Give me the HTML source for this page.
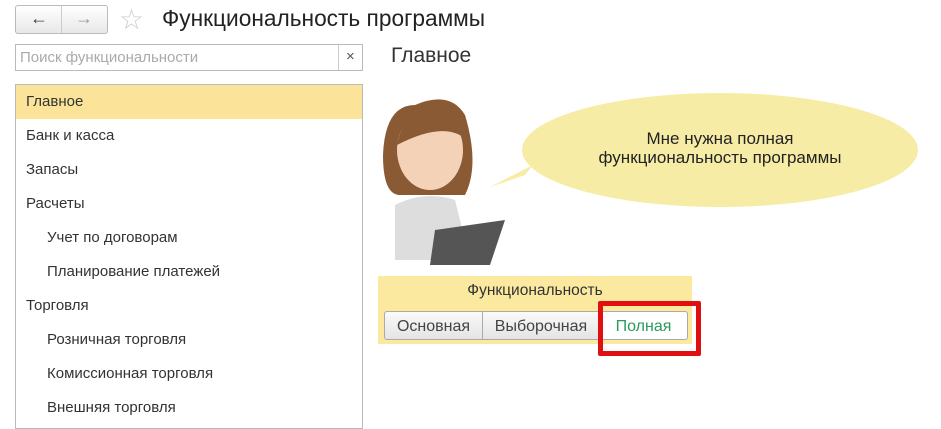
<!DOCTYPE html>
<html><head><meta charset="utf-8"><style>
body{margin:0;width:941px;height:424px;background:#fff;font-family:"Liberation Sans",sans-serif;position:relative;overflow:hidden;color:#333}
.a{position:absolute}
.nav{left:15px;top:5px;width:91px;height:27px;border:1px solid #bbb;border-radius:3px;background:linear-gradient(#fff,#e8e8e8)}
.list div{height:34px;line-height:34px;font-size:15px;padding-left:10px;color:#333}
.list .sub{padding-left:31px}
.btn{top:311px;height:29px;line-height:29px;font-size:16px;text-align:center;border:1px solid #aaa;background:linear-gradient(#fafafa,#e4e4e4);color:#444;box-sizing:border-box}
</style></head><body>
<div class="a nav"><div class="a" style="left:45px;top:0;width:1px;height:27px;background:#ccc"></div>
<span class="a" style="left:14px;top:2px;font-size:18px;color:#444">&#8592;</span><span class="a" style="left:59px;top:2px;font-size:18px;color:#999">&#8594;</span></div>
<span class="a" style="left:119px;top:3px;font-size:28px;color:#ccc">&#9734;</span>
<div class="a" style="left:162px;top:5px;font-size:22.7px;color:#222">Функциональность программы</div>
<div class="a" style="left:15px;top:44px;width:348px;height:27px;border:1px solid #bbb;box-sizing:border-box"><span class="a" style="left:4px;top:4px;font-size:15px;color:#aaa">Поиск функциональности</span><div class="a" style="left:322px;top:0;width:1px;height:25px;background:#ccc"></div><span class="a" style="left:330px;top:3px;font-size:15px;color:#555">×</span></div>
<div class="a" style="left:391px;top:44px;font-size:21px;color:#333">Главное</div>
<div class="a list" style="left:15px;top:84px;width:348px;height:345px;border:1px solid #bbb;box-sizing:border-box">
<div style="background:#fbe49a">Главное</div><div>Банк и касса</div><div>Запасы</div><div>Расчеты</div><div class="sub">Учет по договорам</div><div class="sub">Планирование платежей</div><div>Торговля</div><div class="sub">Розничная торговля</div><div class="sub">Комиссионная торговля</div><div class="sub">Внешняя торговля</div></div>
<svg class="a" style="left:375px;top:85px" width="560" height="185">
<path d="M150 90 L115 102 L158 80Z" fill="#f7eca5"/>
<ellipse cx="345" cy="65" rx="198" ry="57" fill="#f7eca5"/>
<path d="M40 20 Q10 20 8 70 Q8 110 25 110 L90 110 Q105 80 90 30 Q75 5 40 20Z" fill="#8a5a35"/>
<ellipse cx="55" cy="65" rx="33" ry="40" fill="#f4d2b8"/>
<path d="M22 60 Q30 20 60 22 Q85 25 92 55 Q70 35 22 60Z" fill="#8a5a35"/>
<path d="M20 120 Q50 105 80 115 L95 175 L20 175Z" fill="#ddd"/>
<path d="M60 145 L130 135 L115 180 L55 180Z" fill="#555"/>
</svg>
<div class="a" style="left:550px;top:129px;width:340px;text-align:center;font-size:17px;line-height:19px;color:#222">Мне нужна полная<br>функциональность программы</div>
<div class="a" style="left:378px;top:276px;width:314px;height:68px;background:#fbe9a0"></div>
<div class="a" style="left:378px;top:282px;width:314px;text-align:center;font-size:15.5px;color:#333">Функциональность</div>
<div class="a btn" style="left:384px;width:99px;border-radius:3px 0 0 3px">Основная</div>
<div class="a btn" style="left:482px;width:118px">Выборочная</div>
<div class="a btn" style="left:599px;width:89px;background:#fff;color:#2a9a5a;border-radius:0 3px 3px 0">Полная</div>
<div class="a" style="left:598px;top:301px;width:103px;height:55px;border:5px solid #e01010;box-sizing:border-box;border-radius:2px"></div>
</body></html>
